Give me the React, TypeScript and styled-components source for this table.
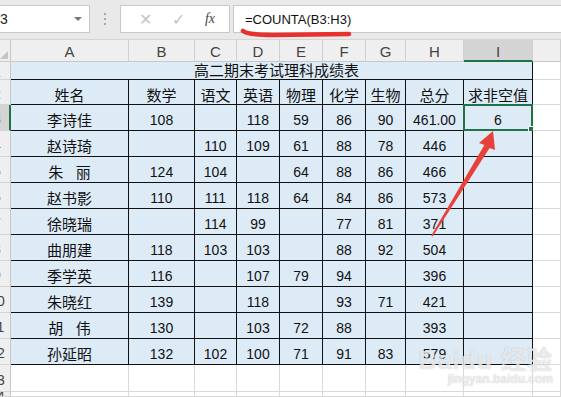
import React from 'react';
import styled, { createGlobalStyle } from 'styled-components';

const GlobalStyle = createGlobalStyle`
  html, body {
    margin: 0;
    padding: 0;
    background: #ffffff;
  }
  * {
    box-sizing: border-box;
  }
`;

const GREEN = '#217346';
const CELL_BG = '#DDEBF7';
const GRID = '#D9D9D9';
const LATIN = `'Liberation Sans', Arial, sans-serif`;
const CJK = `'Liberation Sans', 'Noto Sans CJK SC', sans-serif`;

const Window = styled.div`
  position: relative;
  width: 561px;
  height: 397px;
  overflow: hidden;
  display: flex;
  flex-direction: column;
  background: #ffffff;
`;

// ---- formula bar ----

const FormulaBar = styled.div`
  height: 40px;
  flex: 0 0 40px;
  display: flex;
  align-items: flex-start;
  padding-top: 5px;
  background: #e9e9e9;
  border-bottom: 1px solid #d4d4d4;
`;

const NameBox = styled.div`
  width: 90px;
  height: 28px;
  display: flex;
  align-items: center;
  justify-content: space-between;
  padding: 0 7px 0 0;
  background: #ffffff;
  border: 1px solid #c8c8c8;
  border-left: none;
  font-family: ${LATIN};
  font-size: 14px;
  color: #222;
`;

const Caret = styled.span`
  width: 0;
  height: 0;
  border-left: 4px solid transparent;
  border-right: 4px solid transparent;
  border-top: 4px solid #777;
`;

const Dots = styled.div`
  width: 30px;
  height: 28px;
  display: flex;
  flex-direction: column;
  align-items: center;
  justify-content: center;
  gap: 3px;

  span {
    width: 2px;
    height: 2px;
    background: #a8a8a8;
  }
`;

const FxBox = styled.div`
  width: 110px;
  height: 28px;
  display: flex;
  align-items: center;
  justify-content: space-around;
  padding: 0 4px 0 8px;
  background: #ffffff;
  border: 1px solid #c8c8c8;
`;

const FxIcon = styled.span<{ $dim?: boolean }>`
  font-family: ${props => (props.$dim ? LATIN : `'Liberation Serif', 'Times New Roman', serif`)};
  font-style: ${props => (props.$dim ? 'normal' : 'italic')};
  font-size: ${props => (props.$dim ? '16px' : '14px')};
  color: ${props => (props.$dim ? '#c4c4c4' : '#444')};
`;

const FormulaInput = styled.div`
  position: relative;
  flex: 1;
  height: 28px;
  margin-left: 3px;
  display: flex;
  align-items: center;
  padding-left: 11px;
  background: #ffffff;
  border: 1px solid #c8c8c8;
  border-right: none;
  font-family: ${LATIN};
  font-size: 13px;
  color: #111;
`;

const Underline = styled.svg`
  position: absolute;
  left: 0;
  top: 22px;
  width: 130px;
  height: 12px;
  overflow: visible;
`;

// ---- sheet grid ----

const Sheet = styled.div`
  flex: 1;
  display: grid;
  grid-template-columns: 11px 118px 66px 42px 43px 43px 43px 40px 58px 69px 1fr;
  grid-template-rows: 22px 18px 25px repeat(10, 26px) 27px 1fr;
  overflow: hidden;
`;

const Corner = styled.div`
  background: #efefef;
  border-right: 1px solid #c8c8c8;
  border-bottom: 1px solid #c8c8c8;
  position: relative;
  overflow: hidden;

  &::after {
    content: '';
    position: absolute;
    right: 2px;
    bottom: 2px;
    border-left: 8px solid transparent;
    border-bottom: 8px solid #c4c4c4;
  }
`;

const ColHead = styled.div<{ $active?: boolean }>`
  display: flex;
  align-items: center;
  justify-content: center;
  padding-top: 2px;
  background: ${props => (props.$active ? '#d4d4d4' : '#efefef')};
  border-right: 1px solid #d0d0d0;
  border-bottom: ${props => (props.$active ? `2px solid ${GREEN}` : '1px solid #c8c8c8')};
  font-family: ${LATIN};
  font-size: 15px;
  color: #444;
`;

const RowHead = styled.div<{ $active?: boolean }>`
  display: flex;
  align-items: center;
  overflow: hidden;
  padding-top: 3px;
  background: ${props => (props.$active ? '#d4d4d4' : '#efefef')};
  border-right: ${props => (props.$active ? `2px solid ${GREEN}` : '1px solid #c8c8c8')};
  border-bottom: 1px solid #d4d4d4;
  font-family: ${LATIN};
  font-size: 14px;
  color: #444;

  span {
    flex: 0 0 24px;
    margin-left: -15px;
    text-align: center;
  }
`;

const Title = styled.div`
  grid-column: span 9;
  display: flex;
  align-items: center;
  justify-content: center;
  padding-left: 10px;
  background: ${CELL_BG};
  border-right: 1px solid #111;
  border-bottom: 1px solid #111;
  font-family: ${CJK};
  font-size: 15px;
  line-height: 18px;
  color: #111;
`;

const Cell = styled.div<{ $table?: boolean; $cjk?: boolean; $selected?: boolean }>`
  position: relative;
  display: flex;
  align-items: center;
  justify-content: center;
  padding-top: 4px;
  white-space: pre;
  background: ${props => (props.$table ? CELL_BG : '#ffffff')};
  border-right: 1px solid ${props => (props.$table ? '#111' : GRID)};
  border-bottom: 1px solid ${props => (props.$table ? '#111' : GRID)};
  font-family: ${props => (props.$cjk ? CJK : LATIN)};
  font-size: ${props => (props.$cjk ? '15px' : '14px')};
  color: #111;

  ${props =>
    props.$selected &&
    `
    &::before {
      content: '';
      position: absolute;
      left: -1px;
      top: -1px;
      right: -1px;
      bottom: -1px;
      border: 2px solid ${GREEN};
    }
    &::after {
      content: '';
      position: absolute;
      right: -4px;
      bottom: -4px;
      width: 6px;
      height: 6px;
      background: ${GREEN};
      border: 1px solid #fff;
    }
  `}
`;

// ---- annotations ----

const Annotation = styled.svg`
  position: absolute;
  left: 0;
  top: 0;
  width: 561px;
  height: 397px;
  pointer-events: none;
`;

const Watermark = styled.div`
  position: absolute;
  right: 8px;
  bottom: 11px;
  display: flex;
  flex-direction: column;
  align-items: flex-end;
  pointer-events: none;
  color: rgba(255, 255, 255, 0.7);
  text-shadow: 0 0 1px rgba(120, 120, 120, 0.5);
  font-family: ${CJK};
`;

const MarkTop = styled.div`
  font-size: 25px;
  font-weight: bold;
  letter-spacing: 1px;
`;

const MarkBottom = styled.div`
  font-size: 12px;
  font-weight: bold;
  margin-top: -4px;
`;

const columns = ['A', 'B', 'C', 'D', 'E', 'F', 'G', 'H', 'I', ''];
const headers = ['姓名', '数学', '语文', '英语', '物理', '化学', '生物', '总分', '求非空值'];
const rows = [
  ['李诗佳', '108', '', '118', '59', '86', '90', '461.00', '6'],
  ['赵诗琦', '', '110', '109', '61', '88', '78', '446', ''],
  ['朱   丽', '124', '104', '', '64', '88', '86', '466', ''],
  ['赵书影', '110', '111', '118', '64', '84', '86', '573', ''],
  ['徐晓瑞', '', '114', '99', '', '77', '81', '371', ''],
  ['曲朋建', '118', '103', '103', '', '88', '92', '504', ''],
  ['季学英', '116', '', '107', '79', '94', '', '396', ''],
  ['朱晓红', '139', '', '118', '', '93', '71', '421', ''],
  ['胡   伟', '130', '', '103', '72', '88', '', '393', ''],
  ['孙延昭', '132', '102', '100', '71', '91', '83', '579', ''],
];

export default function App() {
  return (
    <>
      <GlobalStyle />
      <Window>
        <FormulaBar>
          <NameBox>
            <span>3</span>
            <Caret />
          </NameBox>
          <Dots>
            <span />
            <span />
            <span />
          </Dots>
          <FxBox>
            <FxIcon $dim>✕</FxIcon>
            <FxIcon $dim>✓</FxIcon>
            <FxIcon>fx</FxIcon>
          </FxBox>
          <FormulaInput>
            =COUNTA(B3:H3)
            <Underline viewBox="0 0 130 12">
              <path d="M9 3 Q 14 7 40 7 L 115 6" stroke="#e8302c" strokeWidth="4.5" strokeLinecap="round" fill="none" />
            </Underline>
          </FormulaInput>
        </FormulaBar>

        <Sheet>
          <Corner />
          {columns.map((c, i) => (
            <ColHead key={i} $active={c === 'I'}>{c}</ColHead>
          ))}

          <RowHead><span>1</span></RowHead>
          <Title>高二期末考试理科成绩表</Title>
          <Cell />

          <RowHead><span>2</span></RowHead>
          {headers.map(h => (
            <Cell key={h} $table $cjk>{h}</Cell>
          ))}
          <Cell />

          {rows.map((r, ri) => (
            <React.Fragment key={ri}>
              <RowHead $active={ri === 0}><span>{ri + 3}</span></RowHead>
              {r.map((v, ci) => (
                <Cell key={ci} $table $cjk={ci === 0} $selected={ri === 0 && ci === 8}>{v}</Cell>
              ))}
              <Cell />
            </React.Fragment>
          ))}

          {[13, 14].map(n => (
            <React.Fragment key={n}>
              <RowHead><span>{n}</span></RowHead>
              {columns.map((_, ci) => (
                <Cell key={ci} />
              ))}
            </React.Fragment>
          ))}
        </Sheet>

        <Annotation viewBox="0 0 561 397">
          <polygon
            points="431.3,235.6 484.4,145 479,143 493,131 495,150 489.6,148 432.7,236.4"
            fill="#e8403a"
          />
        </Annotation>

        <Watermark>
          <MarkTop>Baidu 经验</MarkTop>
          <MarkBottom>jingyan.baidu.com</MarkBottom>
        </Watermark>
      </Window>
    </>
  );
}
